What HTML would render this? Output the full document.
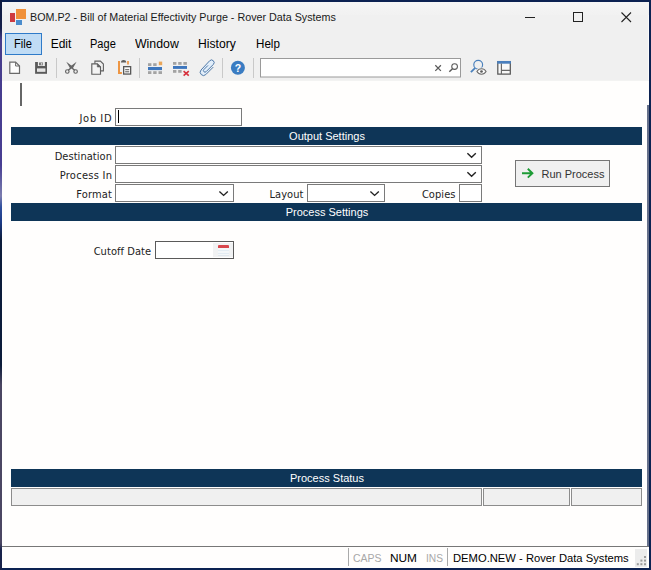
<!DOCTYPE html>
<html>
<head>
<meta charset="utf-8">
<title>BOM.P2 - Bill of Material Effectivity Purge - Rover Data Systems</title>
<style>
*{box-sizing:border-box;margin:0;padding:0}
html,body{width:651px;height:570px;overflow:hidden;background:#0c2252}
body{position:relative;font-family:"Liberation Sans",sans-serif;font-size:12px;color:#000}
.abs{position:absolute}
#win{position:absolute;left:2px;top:2px;width:647px;height:566px;background:#f0f0f0;border-right:1px solid #fbfbfb}
#titlegrad{position:absolute;left:2px;top:2px;width:647px;height:13px;background:linear-gradient(#f6f6f6,#f1f1f1)}
#title{position:absolute;left:30.3px;top:9.1px;font-size:11px;line-height:16px;color:#1a1a1a;white-space:nowrap;transform:scaleX(0.976);transform-origin:0 0}
.menu{position:absolute;top:36px;font-size:12px;line-height:17px;color:#000;white-space:nowrap;transform-origin:0 0}
#filehl{position:absolute;left:5px;top:33px;width:37px;height:22px;background:#c0dcf5;border:1px solid #2f7bc9}
#content{position:absolute;left:2px;top:80px;width:647px;height:467px;background:#fffefd;border-top:1px solid #f3f3f2}
#rline{position:absolute;left:647px;top:105px;width:2px;height:442px;background:#66708a}
.bar{position:absolute;left:11px;width:631px;height:18px;background:#0e3557;color:#fff;font-size:11px;line-height:18px;text-align:center;white-space:nowrap;padding-left:1px}
.lbl{position:absolute;font-family:"DejaVu Sans Condensed","DejaVu Sans",sans-serif;font-size:11px;line-height:14px;color:#222;white-space:nowrap;text-align:right}
.box{position:absolute;background:#fff;border:1px solid #7a7a7a}
.pbox{position:absolute;background:#f0f0f0;border:1px solid #8c8c8c;top:488px;height:18px}
.sep{position:absolute;top:58px;width:1px;height:20px;background:#c9c9c9}
#status{position:absolute;left:2px;top:546px;width:647px;height:22px;background:#fffefd;border-top:1px solid #777}
.st{position:absolute;top:550.2px;font-size:11.5px;line-height:16px;white-space:nowrap;transform-origin:0 0}
</style>
</head>
<body>
<div class="abs" style="left:0;top:0;width:2px;height:570px;background:linear-gradient(180deg,#0f1b40 0,#141f4a 28px,#463c8c 40px,#483e92 165px,#6a6aa6 186px,#7c7cae 196px,#30509e 207px,#1c3a86 222px,#0c1c3a 240px,#0c1c3a 365px,#4b4662 385px,#4b4662 543px,#18224a 550px,#18224a 570px)"></div>
<div id="win"></div>
<div id="titlegrad"></div>

<!-- app logo -->
<div class="abs" style="left:10px;top:13px;width:5px;height:9px;background:#cf3a3f"></div>
<div class="abs" style="left:16px;top:9px;width:10px;height:10px;background:#f0903a"></div>
<div class="abs" style="left:16px;top:20px;width:6px;height:5px;background:#4a8ccc"></div>
<div id="title">BOM.P2 - Bill of Material Effectivity Purge - Rover Data Systems</div>

<!-- window controls -->
<svg class="abs" style="left:520px;top:8px" width="120" height="20" viewBox="0 0 120 20">
 <path d="M5 9.5H15" stroke="#222" stroke-width="1" fill="none"/>
 <rect x="53.5" y="4.5" width="9" height="9" stroke="#222" stroke-width="1" fill="none"/>
 <path d="M101.5 4.5L111 14M111 4.5L101.5 14" stroke="#222" stroke-width="1.1" fill="none"/>
</svg>

<!-- menu -->
<div id="filehl"></div>
<div class="menu" style="left:14.4px;transform:scaleX(.931)">File</div>
<div class="menu" style="left:50.7px">Edit</div>
<div class="menu" style="left:90.3px;transform:scaleX(.92)">Page</div>
<div class="menu" style="left:135px;transform:scaleX(1.026)">Window</div>
<div class="menu" style="left:198.2px;transform:scaleX(1.012)">History</div>
<div class="menu" style="left:255.8px;transform:scaleX(.968)">Help</div>

<!-- toolbar -->
<svg class="abs" style="left:0;top:56px" width="651" height="24" viewBox="0 56 651 24">
 <!-- new -->
 <path d="M9.8 62.1H15.6L19.5 66V73.3H9.8Z" fill="#fdfdfd" stroke="#6a6a6a" stroke-width="1.2"/>
 <path d="M15.6 62.3V66H19.4" fill="none" stroke="#6a6a6a" stroke-width="1"/>
 <!-- save -->
 <path d="M35.1 62H47V73.8H35.1Z" fill="#5a5a5a"/>
 <rect x="37.9" y="62" width="7" height="4" fill="#ececec"/>
 <rect x="39.1" y="62.5" width="3.8" height="2.8" fill="#6a6a6a"/>
 <rect x="40.8" y="63.2" width="1.5" height="1.5" fill="#e6e6e6"/>
 <rect x="37" y="68.4" width="8.4" height="3.4" fill="#ececec"/>
 <rect x="37.8" y="69.6" width="6.8" height="1" fill="#dcdcdc"/>
 <!-- scissors -->
 <path d="M66.3 61.8L73 66.8L70.6 69.2Z" fill="#666"/>
 <path d="M76.6 61.8L69.9 66.8L72.3 69.2Z" fill="#666"/>
 <path d="M72 68L74.6 70.2M70.9 68L68.3 70.2" stroke="#666" stroke-width="1.5" fill="none"/>
 <circle cx="67.3" cy="71.5" r="1.75" fill="none" stroke="#606060" stroke-width="1.15"/>
 <circle cx="75.6" cy="71.5" r="1.75" fill="none" stroke="#606060" stroke-width="1.15"/>
 <!-- copy -->
 <path d="M94.9 61.1H100.4L103.4 64.1V70.9H94.9Z" fill="#f0f0f0" stroke="#606060" stroke-width="1.1"/>
 <path d="M91.8 63.8H97.3L100.5 67V74.2H91.8Z" fill="#f3f3f3" stroke="#606060" stroke-width="1.15"/>
 <path d="M97.3 63.8V67H100.5Z" fill="#606060" stroke="#606060" stroke-width=".6"/>
 <!-- paste -->
 <path d="M119 61V72.9H121.9" fill="none" stroke="#ee9644" stroke-width="2"/>
 <path d="M128 61V64.4" fill="none" stroke="#ee9644" stroke-width="1.7"/>
 <path d="M120.9 62.6C120.9 60.8 122.2 60 123.6 60C125 60 126.3 60.8 126.3 62.6Z" fill="#5e5e5e"/>
 <rect x="123.65" y="66.65" width="7" height="7.4" fill="#fbfbfb" stroke="#585858" stroke-width="1.3"/>
 <path d="M125.2 69.7H129.2M125.2 71.8H129.2" stroke="#585858" stroke-width="1"/>
 <!-- grid add -->
 <g fill="#a3a3a3">
  <rect x="148" y="63.2" width="3.4" height="2.8"/><rect x="153.2" y="63.2" width="3.4" height="2.8"/>
  <rect x="148" y="71.2" width="3.4" height="2.8"/><rect x="153.2" y="71.2" width="3.4" height="2.8"/><rect x="158.5" y="71.2" width="3.5" height="2.8"/>
 </g>
 <rect x="148" y="67" width="14" height="3.1" fill="#3d76bd"/>
 <rect x="158.8" y="61.6" width="3.4" height="3.6" fill="#e9a65a"/>
 <!-- grid delete -->
 <g fill="#a3a3a3">
  <rect x="173" y="62" width="3.4" height="2.8"/><rect x="178.2" y="62" width="3.4" height="2.8"/><rect x="183.4" y="62" width="3.5" height="2.8"/>
  <rect x="173" y="70" width="3.4" height="2.8"/><rect x="178.2" y="70" width="3.4" height="2.8"/>
 </g>
 <rect x="173" y="66" width="14" height="2.9" fill="#3d76bd"/>
 <path d="M183.6 71.2L188.8 75.6M188.8 71.2L183.6 75.6" stroke="#d6303c" stroke-width="1.6" fill="none"/>
 <!-- paperclip -->
 <path d="M205.73 74.63A3.3 3.3 0 0 1 201.07 69.97L209.66 60.76A2.6 2.6 0 0 1 213.34 64.44Z" fill="#e2eefa"/>
 <path d="M213 67.35L205.73 74.63A3.3 3.3 0 0 1 201.07 69.97L209.66 60.76A2.6 2.6 0 0 1 213.34 64.44L206.1 71.7A1.55 1.55 0 0 1 203.9 69.5L207.7 65.7" fill="none" stroke="#4f79a8" stroke-width="1" stroke-linecap="round"/>
 <!-- help -->
 <circle cx="237.9" cy="67.7" r="7" fill="#3a7cc2"/>
 <text x="237.9" y="71.6" font-family="Liberation Sans, sans-serif" font-size="10.5" font-weight="bold" fill="#fff" text-anchor="middle">?</text>
 <!-- search box -->
 <rect x="260.5" y="58.5" width="200" height="18.5" fill="#fff" stroke="#9a9a9a" stroke-width="1"/>
 <path d="M435.3 65.3L440.9 70.9M440.9 65.3L435.3 70.9" stroke="#5a5a5a" stroke-width="1.25" fill="none"/>
 <circle cx="454.6" cy="66.5" r="2.85" fill="none" stroke="#5a5a5a" stroke-width="1.05"/>
 <path d="M452.5 68.7L449.3 71.8" stroke="#5a5a5a" stroke-width="1.4" fill="none"/>
 <!-- find/eye -->
 <circle cx="478.2" cy="64.8" r="4.4" fill="none" stroke="#4a80bc" stroke-width="1.15"/>
 <path d="M475 68.2L470.9 72.2" stroke="#4a80bc" stroke-width="1.8" fill="none"/>
 <path d="M476.9 71.5C479 67.9 484 67.9 486.1 71.5C484 75.1 479 75.1 476.9 71.5Z" fill="#f7f7f7" stroke="#f0f0f0" stroke-width="2.6"/>
 <path d="M476.9 71.5C479 67.9 484 67.9 486.1 71.5C484 75.1 479 75.1 476.9 71.5Z" fill="#fafafa" stroke="#6a6a6a" stroke-width="1.05"/>
 <circle cx="481.5" cy="71.5" r="1.35" fill="#5a5a5a"/>
 <!-- layout -->
 <rect x="497.8" y="61.6" width="12.5" height="12.5" fill="#f8f8f8" stroke="#585858" stroke-width="1.25"/>
 <rect x="497.2" y="61" width="13.7" height="2.7" fill="#4a7fbd"/>
 <path d="M501.4 63.6V74M501.4 70.3H510.5" stroke="#686868" stroke-width="1.15" fill="none"/>
</svg>
<div class="sep" style="left:56px"></div>
<div class="sep" style="left:139px"></div>
<div class="sep" style="left:222px"></div>
<div class="sep" style="left:253px"></div>

<!-- content -->
<div id="content"></div>
<div id="rline"></div>
<div class="abs" style="left:20.4px;top:82.5px;width:1.4px;height:23px;background:#666"></div>

<div class="lbl" style="left:40px;width:72.4px;top:112px;letter-spacing:.76px;word-spacing:-.5px">Job ID</div>
<div class="box" style="left:115px;top:108px;width:127px;height:18px"></div>
<div class="abs" style="left:118px;top:110px;width:1px;height:13px;background:#000"></div>

<div class="bar" style="top:127px">Output Settings</div>

<div class="lbl" style="left:40px;width:72px;top:150px;letter-spacing:.05px">Destination</div>
<div class="box" style="left:115px;top:146px;width:367px;height:18px"></div>
<div class="lbl" style="left:40px;width:72.2px;top:169px;letter-spacing:.26px">Process In</div>
<div class="box" style="left:115px;top:165px;width:367px;height:18px"></div>
<div class="lbl" style="left:40px;width:72px;top:188px;letter-spacing:.16px">Format</div>
<div class="box" style="left:115px;top:184px;width:119px;height:18px"></div>
<div class="lbl" style="left:240px;width:63.5px;top:188px;letter-spacing:.06px">Layout</div>
<div class="box" style="left:307px;top:184px;width:78px;height:18px"></div>
<div class="lbl" style="left:390px;width:65.5px;top:188px;letter-spacing:.06px">Copies</div>
<div class="box" style="left:459px;top:184px;width:23px;height:18px"></div>

<svg class="abs" style="left:0;top:146px" width="651" height="60" viewBox="0 146 651 60">
 <g fill="none" stroke="#222" stroke-width="1.4">
  <path d="M467.4 153.2L471.6 157.2L475.8 153.2"/>
  <path d="M467.4 172.2L471.6 176.2L475.8 172.2"/>
  <path d="M219.4 191.4L223.6 195.4L227.8 191.4"/>
  <path d="M370.4 191.4L374.6 195.4L378.8 191.4"/>
 </g>
</svg>

<!-- run button -->
<div class="abs" style="left:515px;top:160px;width:95px;height:27px;background:#f0f0f0;border:1px solid #767676"></div>
<svg class="abs" style="left:520px;top:166px" width="16" height="14" viewBox="520 166 16 14">
 <path d="M522 173.2H532M527.8 168.8L532.4 173.2L527.8 177.6" fill="none" stroke="#1d9b35" stroke-width="1.9"/>
</svg>
<div class="abs" style="left:541.5px;top:167px;font-size:11px;line-height:14px;color:#333;white-space:nowrap">Run Process</div>

<div class="bar" style="top:203px">Process Settings</div>

<div class="lbl" style="left:80px;width:71.2px;top:245px;letter-spacing:.06px">Cutoff Date</div>
<div class="box" style="left:155px;top:241px;width:79px;height:18px;border-color:#5a5a5a"></div>
<div class="abs" style="left:213px;top:243px;width:20px;height:14px;background:#f1f2f3"></div>
<div class="abs" style="left:218px;top:245px;width:11px;height:3px;background:#d8474d;border-radius:1px 1px 0 0"></div>
<div class="abs" style="left:218px;top:248px;width:11px;height:8px;background:linear-gradient(#f4f7f9 0,#f4f7f9 2px,#e3ecf3 2px,#e3ecf3 3px,#f4f7f9 3px,#f4f7f9 5px,#e3ecf3 5px,#e3ecf3 6px,#f4f7f9 6px);border-bottom:1px solid #e1e8ee"></div>

<div class="bar" style="top:469px">Process Status</div>
<div class="pbox" style="left:11px;width:471px"></div>
<div class="pbox" style="left:483px;width:87px"></div>
<div class="pbox" style="left:571px;width:71px"></div>

<!-- status bar -->
<div id="status"></div>
<div class="abs" style="left:347.5px;top:548px;width:1px;height:18px;background:#aaa"></div>
<div class="abs" style="left:447px;top:548px;width:1px;height:18px;background:#aaa"></div>
<div class="st" style="left:352.8px;color:#a8a8a8;transform:scaleX(.91)">CAPS</div>
<div class="st" style="left:390.4px;color:#000;transform:scaleX(1.03)">NUM</div>
<div class="st" style="left:425.5px;color:#a8a8a8;transform:scaleX(.886)">INS</div>
<div class="st" style="left:452.5px;color:#000;transform:scaleX(.975)">DEMO.NEW - Rover Data Systems</div>
<div class="abs" style="left:635px;top:549px;width:12px;height:18px;background:#ececec"></div>
<svg class="abs" style="left:635px;top:554px" width="12" height="13" viewBox="635 554 12 13">
 <g fill="#9c9c9c"><rect x="644" y="556" width="2" height="2"/><rect x="640.4" y="559.6" width="2" height="2"/><rect x="644" y="559.6" width="2" height="2"/><rect x="636.8" y="563.2" width="2" height="2"/><rect x="640.4" y="563.2" width="2" height="2"/><rect x="644" y="563.2" width="2" height="2"/></g>
</svg>
</body>
</html>
